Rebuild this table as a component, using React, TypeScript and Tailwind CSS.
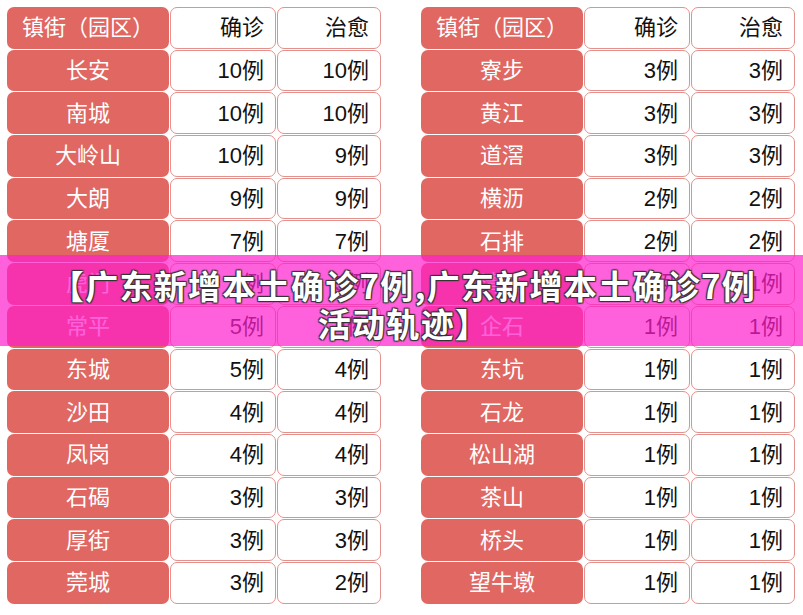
const left = [
  ["长安", "10例", "10例"],
  ["南城", "10例", "10例"],
  ["大岭山", "10例", "9例"],
  ["大朗", "9例", "9例"],
  ["塘厦", "7例", "7例"],
  ["虎门", "5例", "5例"],
  ["常平", "5例", "4例"],
  ["东城", "5例", "4例"],
  ["沙田", "4例", "4例"],
  ["凤岗", "4例", "4例"],
  ["石碣", "3例", "3例"],
  ["厚街", "3例", "3例"],
  ["莞城", "3例", "2例"],
];

const right = [
  ["寮步", "3例", "3例"],
  ["黄江", "3例", "3例"],
  ["道滘", "3例", "3例"],
  ["横沥", "2例", "2例"],
  ["石排", "2例", "2例"],
  ["清溪", "1例", "1例"],
  ["企石", "1例", "1例"],
  ["东坑", "1例", "1例"],
  ["石龙", "1例", "1例"],
  ["松山湖", "1例", "1例"],
  ["茶山", "1例", "1例"],
  ["桥头", "1例", "1例"],
  ["望牛墩", "1例", "1例"],
];

const Table = ({ rows }: { rows: string[][] }) => {
  const all = [["镇街（园区）", "确诊", "治愈"], ...rows];
  return (
    <div className="flex w-[374px] flex-col gap-[1px]">
      {all.map(([name, a, b]) => (
        <div key={name} className="flex h-[41.7px] gap-[1px]">
          <div className="flex w-[162px] items-center justify-center rounded-[7px] bg-[#e06762] text-white">
            {name}
          </div>
          <div className="flex w-[106px] items-center justify-end rounded-[7px] border border-[#e2918d] bg-white pr-[11px] text-[#111]">
            {a}
          </div>
          <div className="flex w-[104px] items-center justify-end rounded-[7px] border border-[#e2918d] bg-white pr-[11px] text-[#111]">
            {b}
          </div>
        </div>
      ))}
    </div>
  );
};

export default function App() {
  return (
    <div
      className="relative h-[615px] w-[803px] overflow-hidden bg-white text-[22px]"
      style={{ fontFamily: '"Liberation Sans", "Noto Sans CJK SC", sans-serif' }}
    >
      <div className="flex gap-[40px] pl-[7px] pt-[7px]">
        <Table rows={left} />
        <Table rows={right} />
      </div>

      {/* Title banner */}
      <div className="absolute left-0 top-[255px] flex h-[91px] w-full items-center justify-center bg-[rgba(255,30,205,0.7)] pt-[6px]">
        <p
          className="whitespace-nowrap pl-[4px] text-center text-[33px] font-bold leading-[38px] tracking-[1.3px] text-white"
          style={{
            fontFamily: '"Noto Sans CJK SC", sans-serif',
            textShadow:
              "1px 1px 1px #333, -1px -1px 1px #333, 1px -1px 1px #333, -1px 1px 1px #333",
          }}
        >
          【广东新增本土确诊7例,广东新增本土确诊7例
          <br />
          活动轨迹】
        </p>
      </div>
    </div>
  );
}
